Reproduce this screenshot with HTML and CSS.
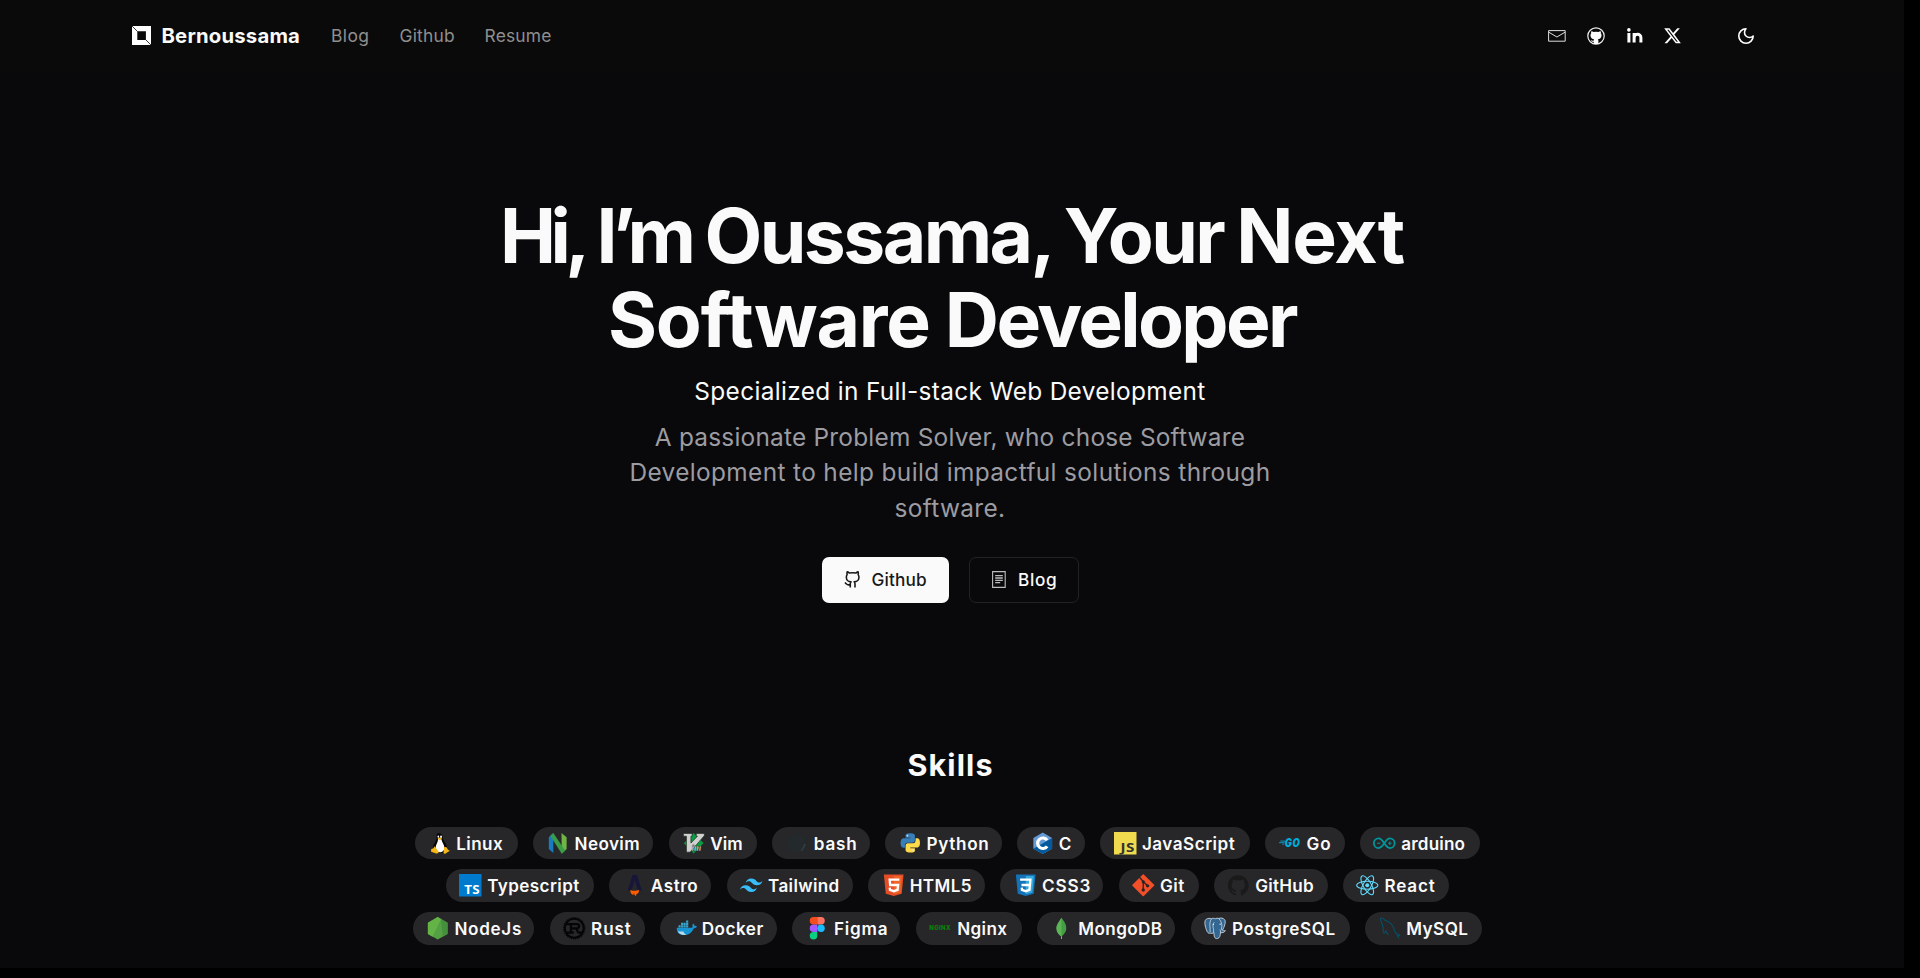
FILE: index.html
```html
<!DOCTYPE html>
<html lang="en">
<head>
<meta charset="utf-8">
<title>Bernoussama</title>
<link rel="stylesheet" href="styles.css">
</head>
<body>
<div class="page">
  <header class="header">
    <a class="brand">
      <svg class="brand-logo" viewBox="0 0 19 19"><path fill="#fff" fill-rule="evenodd" d="M0 0h19v19H0zM5.300 5.300v8.600h8.600V5.300z"/><path stroke="#0a0a0a" stroke-width=".8" d="M0 0l5.500 5.500M13.700 13.700L19 19"/></svg>
      <span class="brand-name">Bernoussama</span>
    </a>
    <nav class="nav">
      <a class="nav-blog">Blog</a>
      <a class="nav-github">Github</a>
      <a>Resume</a>
    </nav>
    <div class="socials">
      <svg class="social-mail" viewBox="0 0 18 12"><path fill="none" stroke="#dedede" d="M.6.6h16.600v10.600H.6zM.8 2.200l8.100 4.800 8.100-4.800"/></svg>
      <svg class="social-github" viewBox="0 0 18 18"><circle cx="9" cy="9" r="8.200" fill="none" stroke="#eee" stroke-width="1.200"/><path fill="#fff" d="M4.300 4.200c.8 0 1.700.4 2.400.9a9 9 0 0 1 4.600 0c.7-.5 1.600-.9 2.400-.9.3.8.3 1.500.1 2.100.6.7.8 1.400.7 2.400-.2 2.300-1.600 3.300-3.700 3.600.5.5.6 1 .6 1.800v3H6.700v-2.400c-1.500.3-2.200-.4-2.700-1.500.9 0 1.300.8 2.700.5 0-.6.2-1.100.5-1.400-2.100-.3-3.500-1.300-3.700-3.600-.1-1 .1-1.700.7-2.400-.2-.6-.2-1.300.1-2.100z"/></svg>
      <svg class="social-linkedin" viewBox="0 0 16 15"><circle cx="1.900" cy="1.900" r="1.800" fill="#fff"/><path fill="none" stroke="#fff" stroke-width="3" d="M1.900 5v9.500M7.100 14.500V5M7.100 10c0-4.600 6.800-5 6.800-.4v4.900"/></svg>
      <svg class="social-x" viewBox="1 2 22 20"><path fill="#fff" d="M18.244 2.250h3.308l-7.227 8.260 8.502 11.240H16.170l-5.214-6.817L4.990 21.750H1.680l7.730-8.835L1.254 2.250H8.080l4.713 6.231zm-1.161 17.520h1.833L7.084 4.126H5.117z"/></svg>
      <svg class="theme-moon" viewBox="2 2 20 20"><path fill="none" stroke="#fff" stroke-width="2" stroke-linejoin="round" d="M12 3a6 6 0 0 0 9 9 9 9 0 1 1-9-9Z"/></svg>
    </div>
  </header>

  <main class="main">
    <h1 class="title"><span class="title-line"><span class="tight">Hi, I’m </span><span class="name">Oussama, Your </span><span class="loose">Next</span></span><span class="title-line"><span class="loose">Software </span><span class="name">Developer</span></span></h1>
    <p class="subtitle">Specialized in Full-stack Web Development</p>
    <p class="lead"><span class="lead-first">A passionate Problem Solver, who chose Software</span><br>Development to help build impactful solutions through<br>software.</p>
    <div class="actions">
      <a class="btn btn--primary">
        <svg class="btn-github-icon" viewBox="1 1 21 22"><path fill="none" stroke="#18181b" stroke-width="2" stroke-linejoin="round" d="M15 22v-4a4.800 4.800 0 0 0-1-3.500c3 0 6-2 6-5.500.08-1.250-.27-2.480-1-3.500.28-1.150.28-2.350 0-3.500 0 0-1 0-3 1.500-2.640-.5-5.360-.5-8 0C6 2 5 2 5 2c-.3 1.150-.3 2.350 0 3.500A5.403 5.403 0 0 0 4 9c0 3.500 3 5.500 6 5.500-.39.49-.68 1.050-.85 1.650-.17.6-.22 1.230-.15 1.850v4M9 18c-4.510 2-5-2-7-2"/></svg>
        <span>Github</span>
      </a>
      <a class="btn btn--outline">
        <svg class="btn-blog-icon" viewBox="0 0 14 17"><path fill="none" stroke="#bdbdbd" stroke-width="1.100" d="M.6.6h12.600v15.800H.6z"/><path stroke="#bdbdbd" stroke-width="1.300" d="M3.200 4.600h7.600M3.200 7h7.600M3.200 9.400h7.600M3.200 11.600h5"/></svg>
        <span class="btn-blog-label">Blog</span>
      </a>
    </div>

    <h2 class="skills-title">Skills</h2>
    <ul class="skills">
      <li class="skill linux"><svg viewBox="0 0 24 24"><path fill="#050505" d="M10 1.500c3-.8 5.600.8 5.600 4 0 3.500 4.900 7.500 4.900 12.500L17 22H9l-3.800-4.500C5.200 13.500 9.500 9 9.300 6.500c-.2-2-.4-4 .7-5z"/><path fill="#fff" d="M10.800 7.500l3.500.3c.5 3.200 3.200 5.700 3.200 9.200 0 2.800-2.200 4.500-4.700 4.500S8.200 20 8 17.500c-.1-3.600 2.700-6.300 2.800-10z"/><ellipse cx="11" cy="5" rx=".9" ry="1.200" fill="#fff"/><ellipse cx="13.900" cy="5" rx="1" ry="1.300" fill="#fff"/><path fill="#f7b715" d="M10 6.800l2.300-1 2.800 1-2.500 1.900zM7 15.300l4.200 5.500c.5 1.800-1 2.300-2.500 2L3.500 21c-.7-.5 0-1.500 0-3l2-.5zM17.300 15.800l2.500.5 1.500 2.500 1.700 1c.3.900-1.500 1.100-3 2.400s-3.200 1.300-3.500-.4z"/></svg>Linux</li>
      <li class="skill neovim"><svg viewBox="0 0 24 24"><path fill="#197cc0" d="M3 5.500L7.800 1v21.500L3 18z"/><path fill="#6fb445" d="M16.500 1L22 5.500V18l-5.200 4.800z"/><path fill="#3a9b48" d="M7.800 1L20.500 20l-3.700 3.300L4.500 4z"/></svg>Neovim</li>
      <li class="skill vim"><svg viewBox="0 0 24 24"><path fill="#089c42" d="M12.500 1L23 11.800 12.500 23 2 12z"/><path fill="#d0d0d0" stroke="#192419" stroke-width=".7" d="M1.500 1.500h9.300v3H9.500v7.300l7-7.300h-1.300v-3h8.600v2.400L8.600 21.500H4.700V4.500H1.500z"/><text x="10" y="20.500" font-family="Liberation Serif" font-style="italic" font-weight="700" font-size="10" fill="#ddd" stroke="#192419" stroke-width=".3">im</text></svg>Vim</li>
      <li class="skill bash"><svg viewBox="0 0 24 24"><path fill="#24292b" d="M12 1l10 5.500v11L12 23 2 17.500v-11z"/><path stroke="#304348" stroke-width="1.500" d="M16.500 20l4-7"/></svg>bash</li>
      <li class="skill python"><svg viewBox="-2 -1.600 28 28"><path fill="#387eb8" d="M14.250.18l.9.2.73.26.59.3.45.32.34.34.25.34.16.33.1.3.04.26.02.2-.01.13V8.500l-.05.63-.13.55-.21.46-.26.38-.3.31-.33.25-.35.19-.35.14-.33.1-.3.07-.26.04-.21.02H8.770l-.69.05-.59.14-.5.22-.41.27-.33.32-.27.35-.2.36-.15.37-.1.35-.07.32-.04.27-.02.21v3.060H3.170l-.21-.03-.28-.07-.32-.12-.35-.18-.36-.26-.36-.36-.35-.46-.32-.59-.28-.73-.21-.88-.14-1.050-.05-1.230.06-1.220.16-1.040.24-.87.32-.71.36-.57.4-.44.42-.33.42-.24.4-.16.36-.1.32-.05.24-.01h.16l.06.01h8.160v-.83H6.180l-.01-2.750-.02-.37.05-.34.11-.31.17-.28.25-.26.31-.23.38-.2.44-.18.51-.15.58-.12.64-.1.71-.06.77-.04.84-.02 1.270.05z"/><path transform="rotate(180 12 12)" fill="#ffdb4c" d="M14.250.18l.9.2.73.26.59.3.45.32.34.34.25.34.16.33.1.3.04.26.02.2-.01.13V8.500l-.05.63-.13.55-.21.46-.26.38-.3.31-.33.25-.35.19-.35.14-.33.1-.3.07-.26.04-.21.02H8.770l-.69.05-.59.14-.5.22-.41.27-.33.32-.27.35-.2.36-.15.37-.1.35-.07.32-.04.27-.02.21v3.060H3.170l-.21-.03-.28-.07-.32-.12-.35-.18-.36-.26-.36-.36-.35-.46-.32-.59-.28-.73-.21-.88-.14-1.050-.05-1.230.06-1.220.16-1.040.24-.87.32-.71.36-.57.4-.44.42-.33.42-.24.4-.16.36-.1.32-.05.24-.01h.16l.06.01h8.160v-.83H6.180l-.01-2.750-.02-.37.05-.34.11-.31.17-.28.25-.26.31-.23.38-.2.44-.18.51-.15.58-.12.64-.1.71-.06.77-.04.84-.02 1.270.05z"/><circle cx="8.500" cy="3" r="1.100" fill="#ddd"/><circle cx="15.500" cy="21" r="1.100" fill="#ddd"/></svg>Python</li>
      <li class="skill clang"><svg viewBox="0 0 24 24"><path fill="#659ad3" d="M12.500.5l10 5.800v11.500l-10 5.700-10-5.700V6.300z"/><path fill="#03599c" d="M22.500 6.300v11.500l-10 5.700-10-5.700z"/><path fill="none" stroke="#fff" stroke-width="3.400" d="M17.200 8.700a5.600 5.600 0 1 0 0 6.600"/></svg>C</li>
      <li class="skill javascript"><svg viewBox="0 0 24 24"><path fill="#f0db4f" d="M0 0h24v24H0z"/><text x="6.800" y="21.600" font-family="Open Sans" font-weight="700" font-size="13.500" fill="#323330" textLength="15.500" lengthAdjust="spacingAndGlyphs">JS</text></svg>JavaScript</li>
      <li class="skill go"><svg viewBox="0 0 24 24"><path stroke="#00acd7" stroke-width=".9" d="M1.500 9.700h5M0 11.400h6M3.500 13h2"/><text x="6" y="16.400" font-family="Inter" font-weight="900" font-style="italic" font-size="12" fill="#00acd7" textLength="16.800" lengthAdjust="spacingAndGlyphs">GO</text></svg>Go</li>
      <li class="skill arduino"><svg viewBox="0 0 24 24"><path fill="none" stroke="#00979c" stroke-width="1.900" d="M12 12C9.500 8.300 8 6.900 6 6.900a5.100 5.100 0 0 0 0 10.200c2 0 3.500-1.400 6-5.100s4-5.100 6-5.100a5.100 5.100 0 0 1 0 10.200c-2 0-3.500-1.400-6-5.100z"/><path stroke="#00979c" stroke-width="1.100" d="M4.300 12h3.600M16.200 12h3.600M18 10.200v3.600"/></svg>arduino</li>

      <li class="skill typescript"><svg viewBox="0 0 24 24"><path fill="#007acc" d="M0 0h24v24H0z"/><text x="5.500" y="21.400" font-family="Open Sans" font-weight="700" font-size="13.500" fill="#fff" textLength="17" lengthAdjust="spacingAndGlyphs">TS</text></svg>Typescript</li>
      <li class="skill astro"><svg viewBox="0 0 24 24"><path fill="#17153a" d="M10.200 1h4.600l5.400 17c-1.700-.9-3.200-1.300-4.600-1.500L12.500 6.500l-3 10c-1.600.2-3 .6-4.600 1.500z"/><path fill="#ff5d01" d="M8 17c2.500 1.300 6.500 1.300 8.800-.2.6 2.500-.5 3.700-2 4.600-.7.500-1 1.100-.8 2-1.800-.6-2.400-1.700-2-3.100-.7.500-1 1.200-.9 2.100C8.600 21.300 7.500 19.500 8 17z"/></svg>Astro</li>
      <li class="skill tailwind"><svg viewBox="0 0 24 24"><path fill="#38bdf8" d="M12.001 4.800c-3.200 0-5.200 1.600-6 4.800 1.200-1.600 2.600-2.200 4.200-1.800.913.228 1.565.89 2.288 1.624C13.666 10.618 15.027 12 18.001 12c3.200 0 5.200-1.600 6-4.800-1.200 1.600-2.600 2.200-4.200 1.800-.913-.228-1.565-.89-2.288-1.624C16.337 6.182 14.976 4.800 12.001 4.800zm-6 7.200c-3.200 0-5.200 1.600-6 4.800 1.200-1.600 2.600-2.200 4.200-1.800.913.228 1.565.89 2.288 1.624 1.177 1.194 2.538 2.576 5.512 2.576 3.200 0 5.200-1.600 6-4.800-1.200 1.600-2.600 2.200-4.200 1.800-.913-.228-1.565-.89-2.288-1.624C10.337 13.382 8.976 12 6.001 12z"/></svg>Tailwind</li>
      <li class="skill html"><svg viewBox="0 0 24 24"><path fill="#e44d26" d="M2 .5h21l-2 20.500-8.500 2.500L4 21z"/><path fill="#f16529" d="M12.500 2.200h8.700L19.500 19.700l-7 2z"/><path fill="none" stroke="#fff" stroke-width="2.500" d="M18.500 6H8.200l.5 5.700h8.500l-.6 5.300-4.100 1.300-4-1.300-.2-2.500"/></svg>HTML5</li>
      <li class="skill css"><svg viewBox="0 0 24 24"><path fill="#1572b6" d="M2 .5h21l-2 20.500-8.500 2.500L4 21z"/><path fill="#33a9dc" d="M12.500 2.200h8.700L19.500 19.700l-7 2z"/><path fill="none" stroke="#fff" stroke-width="2.500" d="M6.500 6h11l-.5 5.700H8M17 11.700l-.5 5.300-4 1.300-4-1.300-.2-2.500"/></svg>CSS3</li>
      <li class="skill git"><svg viewBox="0 0 24 24"><path fill="#f34f29" stroke="#f34f29" stroke-width="1.600" stroke-linejoin="round" d="M12 1l11 11-11 11L1 12z"/><path fill="none" stroke="#2a2425" stroke-width="1.400" d="M8 3.500l4 4.500v9M12 8l4.500 4.500"/><circle cx="12" cy="8.300" r="1.700" fill="#2a2425"/><circle cx="12" cy="17" r="1.800" fill="#2a2425"/><circle cx="16.600" cy="12.600" r="1.800" fill="#2a2425"/></svg>Git</li>
      <li class="skill github"><svg viewBox="-.5 -.5 25 25"><path fill="#1a1a1b" d="M12 .8C5.600.8.5 5.900.5 12.300c0 5.100 3.300 9.400 7.900 10.900.6.100.8-.3.8-.6v-2c-3.200.7-3.900-1.500-3.900-1.500-.5-1.300-1.300-1.700-1.300-1.700-1-.7.100-.7.100-.7 1.200.1 1.800 1.200 1.800 1.200 1 1.800 2.700 1.300 3.300 1 .1-.8.400-1.300.7-1.500-2.500-.3-5.200-1.300-5.200-5.700 0-1.300.4-2.300 1.200-3.100-.1-.3-.5-1.500.1-3.100 0 0 1-.3 3.200 1.200a11 11 0 0 1 5.700 0c2.200-1.500 3.200-1.200 3.200-1.200.6 1.600.2 2.800.1 3.100.7.800 1.200 1.800 1.200 3.100 0 4.400-2.700 5.400-5.300 5.700.4.400.8 1.100.8 2.100v3.200c0 .3.200.7.800.6 4.600-1.500 7.900-5.800 7.900-10.900C23.500 5.900 18.400.8 12 .8z"/></svg>GitHub</li>
      <li class="skill react"><svg viewBox="0 0 24 24"><g fill="none" stroke="#61dafb" stroke-width="1.150"><ellipse cx="12" cy="12" rx="11.300" ry="4.300"/><ellipse cx="12" cy="12" rx="11.300" ry="4.300" transform="rotate(60 12 12)"/><ellipse cx="12" cy="12" rx="11.300" ry="4.300" transform="rotate(120 12 12)"/></g><circle cx="12" cy="12" r="2.100" fill="#61dafb"/></svg>React</li>

      <li class="skill nodejs"><svg viewBox="0 0 24 24"><path fill="#54a044" d="M12.500 0L23 6v12l-10.500 6L2 18V6z"/><path fill="#64b346" d="M12.500 0L16 2 7 21 2 18V6z"/><path fill="#468f3c" d="M16 2l7 4v12l-5 2.900z"/></svg>NodeJs</li>
      <li class="skill rust"><svg viewBox="0 0 24 24"><circle cx="12" cy="12" r="10.100" fill="none" stroke="#050505" stroke-width="2.200"/><circle cx="12" cy="12" r="11.400" fill="none" stroke="#050505" stroke-width="1.200" stroke-dasharray="1.100 1.140"/><path fill="none" stroke="#050505" stroke-width="2.400" d="M3.500 7.600h11.300c3.200 0 3.200 4.400 0 4.400H8M8.500 7.600v9M4 16.600h7.500M13 12c3.200 0 1.200 4.600 4 4.600h3.500"/></svg>Rust</li>
      <li class="skill docker"><svg viewBox="-.5 0 24 24"><path fill="#1794d4" d="M2.500 11.500h15.200c.7 0 1.500-.2 1.800-.5-.7-1.300-.4-2.900.4-4 1 .7 1.500 1.500 1.500 2.500.9-.2 1.900 0 2.600.5-.6 1.300-1.800 1.900-3.400 1.900C18.500 17 14.800 19.300 10 19.300c-5 0-7.800-2.600-7.500-7.800z"/><path fill="#39a6cf" d="M4.300 8.800h2.300v2.300H4.300zM7 8.800h2.300v2.300H7zM9.700 8.800H12v2.300H9.700zM12.400 8.800h2.300v2.300h-2.300zM7 6.200h2.300v2.300H7zM9.700 6.200H12v2.300H9.700zM12.400 6.200h2.300v2.300h-2.300zM12.400 3.600h2.300v2.300h-2.300z"/><path fill="#b9dbe8" d="M3.500 15.300c2 .5 4.500 0 6 .2.800 1.900 2 3.300 3.500 3.600-4.500.8-8.200-.6-9.500-3.800z"/></svg>Docker</li>
      <li class="skill figma"><svg viewBox="1 0 24 24"><path fill="#f24e1e" d="M13 0H9a4 4 0 0 0 0 8h4z"/><path fill="#ff7262" d="M13 0h4a4 4 0 0 1 0 8h-4z"/><path fill="#a259ff" d="M13 8H9a4 4 0 0 0 0 8h4z"/><circle cx="17" cy="12" r="4" fill="#1abcfe"/><path fill="#0acf83" d="M9 16h4v4a4 4 0 1 1-4-4z"/></svg>Figma</li>
      <li class="skill nginx"><svg viewBox="0 0 24 24"><text x=".3" y="14" font-family="Inter" font-weight="800" font-size="6.500" fill="#098209" textLength="23" lengthAdjust="spacingAndGlyphs">NGINX</text></svg>Nginx</li>
      <li class="skill mongodb"><svg viewBox="0 0 24 24"><path fill="#a9aa88" d="M11.600 19h1l.3 4.500h-1z"/><path fill="#449e45" d="M12.200.8c3 4.100 5.200 6.700 5.200 11.300 0 3.700-2.200 6.300-5.200 8.700-3.100-2.200-5.300-5-5.300-8.600 0-4.200 2.700-6.800 5.300-11.400z"/><path fill="#5eb355" d="M12.200.8v20c-3.100-2.200-5.300-5-5.300-8.600 0-4.200 2.700-6.800 5.300-11.400z"/></svg>MongoDB</li>
      <li class="skill postgresql"><svg viewBox="0 0 24 24"><path fill="#336791" stroke="#d5dde3" stroke-width=".9" stroke-linejoin="round" d="M8 1.800c1.600-.7 3-.5 4 0 1.200-.6 2.600-.7 3.800-.3 2-.8 4.700-.5 6.300 1.500 1.500 2-.5 8-2.400 11 .8.700 2 .7 3 .5-.8 2-3 2.600-5.200 2.100-.2 2.800-.3 5.900-3.300 6.400-3.200.5-3.500-2.600-3.600-6.400-1.200.9-3.200 1.200-4.300.5-2.200 1.200-3.600-2.600-4.600-6C.5 7 .6 3.500 2.500 2.300 4 1.300 6.300 1.200 8 1.800z"/><path fill="none" stroke="#d5dde3" stroke-width=".8" d="M8 2C6 4.500 6 8 6.500 12c.5 1.500-.5 2.500 0 4M15.800 1.700c2.500 2.500 3.500 6 3.200 8.500s-1 3 .4 4M11 5.500c-2 2-1.500 5-.8 7.500v3.600M17.700 16.600c-.2-1.500 0-2-.7-3.200"/><circle cx="10" cy="7.800" r=".7" fill="#fff"/><circle cx="17.200" cy="7.600" r=".7" fill="#fff"/></svg>PostgreSQL</li>
      <li class="skill mysql"><svg viewBox="0 0 24 24"><path fill="none" stroke="#00546b" stroke-width="1.100" stroke-linejoin="round" d="M22.500 22.500l-2-2.600 2.700-.5c-2-.9-4-1-5-3.400C16.500 9.500 12.500 5 8 3.800 6.200 2 4.200.8 2.800 1.300c-1.100.8.3 2.700 1 4.200.6 3 2 4.800 1.800 7.500-.2 2.500.2 4.500 1.300 4.300 1 0 .9-2 1.200-2.800.9 1.500 1.700 3.400 3.200 4.500"/></svg>MySQL</li>
    </ul>
  </main>
</div>
</body>
</html>
```

FILE: styles.css
```css
* { box-sizing: border-box; }

body {
  margin: 0;
  background: #000;
  color: #fafafa;
  font-family: Inter, "Liberation Sans", sans-serif;
  overflow: hidden;
}

svg { display: block; flex: none; overflow: visible; }

.page {
  width: 1904px;
  height: 968px;
  background: #09090b;
  overflow: hidden;
}

/* Header */
.header {
  display: flex;
  align-items: center;
  height: 71px;
  padding: 0 150px 0 132px;
  background: #0a0a0a;
}

.brand { display: flex; align-items: center; gap: 10.500px; width: 199px; }
.brand-logo { width: 19px; height: 19px; }
.brand-name { font-size: 20.300px; font-weight: 700; letter-spacing: .2px; }

.nav {
  display: flex;
  font-size: 17.400px;
  line-height: 24px;
  letter-spacing: .2px;
  color: #8f8f8f;
}
.nav-blog { width: 68.500px; letter-spacing: .4px; }
.nav-github { width: 85px; }

.socials { display: flex; align-items: center; margin-left: auto; }
.social-mail { width: 18px; height: 12px; margin-right: 20.500px; }
.social-github { width: 18px; height: 18px; margin-right: 22px; }
.social-linkedin { width: 16px; height: 15px; margin-right: 21.500px; }
.social-x { width: 17px; height: 15.500px; margin-right: 57px; }
.theme-moon { width: 16px; height: 16px; }

/* Hero */
.main {
  display: flex;
  flex-direction: column;
  align-items: center;
  width: 1900px;
  padding-top: 123px;
}

.title {
  margin: 0 0 11px 4px;
  font-size: 75px;
  line-height: 84px;
  font-weight: 700;
  text-align: center;
  white-space: nowrap;
}
.title-line { display: block; }
.tight { letter-spacing: -5.600px; word-spacing: 2px; }
.name { letter-spacing: -2.600px; word-spacing: -2px; }
.loose { letter-spacing: -1.200px; word-spacing: -1.500px; }

.subtitle {
  margin: 0 0 10.600px;
  font-size: 24.400px;
  line-height: 36px;
  letter-spacing: .34px;
}

.lead {
  margin: 0;
  font-size: 24.400px;
  line-height: 35.600px;
  letter-spacing: .37px;
  text-align: center;
  color: #9c9ca2;
}
.lead-first { letter-spacing: .23px; }

.actions { display: flex; gap: 20.500px; margin-top: 30.200px; }

.btn {
  display: flex;
  align-items: center;
  height: 46px;
  padding-left: 22px;
  border-radius: 7px;
  font-size: 17.200px;
  font-weight: 500;
}
.btn--primary { width: 127px; background: #fafafa; color: #18181b; gap: 11.500px; letter-spacing: .16px; }
.btn--outline { width: 109.500px; border: 1px solid #222225; gap: 12.500px; padding-left: 21.500px; }
.btn-blog-label { letter-spacing: .7px; }
.btn-github-icon { width: 16.500px; height: 17.500px; }
.btn-blog-icon { width: 14px; height: 17px; }

/* Skills */
.skills-title {
  margin: 144.700px 0 0 1px;
  font-size: 30.500px;
  line-height: 36px;
  font-weight: 700;
  letter-spacing: 1.100px;
}

.skills {
  display: flex;
  flex-wrap: wrap;
  justify-content: center;
  gap: 10.200px 15.200px;
  width: 1080px;
  margin: 43.500px 5.400px 0 0;
  padding: 0;
  list-style: none;
}

.skill {
  display: flex;
  align-items: center;
  gap: 5.500px;
  height: 32.500px;
  padding-left: 13.500px;
  border-radius: 17px;
  background: #27272a;
  font-size: 17.100px;
  font-weight: 600;
  white-space: nowrap;
}
.skill svg { width: 22.500px; height: 22.500px; }

.linux { width: 103px; letter-spacing: .41px; }
.neovim { width: 120.500px; letter-spacing: .42px; }
.vim { width: 88.500px; letter-spacing: .09px; }
.bash { width: 97.500px; letter-spacing: .8px; }
.python { width: 117px; letter-spacing: .7px; }
.clang { width: 68px; }
.javascript { width: 149.500px; letter-spacing: .5px; }
.go { width: 79.500px; letter-spacing: .8px; }
.arduino { width: 120px; letter-spacing: .15px; }
.typescript { width: 148.500px; letter-spacing: .4px; }
.astro { width: 102px; letter-spacing: .6px; }
.tailwind { width: 126.500px; letter-spacing: .35px; }
.html { width: 117px; letter-spacing: .4px; }
.css { width: 103px; letter-spacing: .9px; }
.git { width: 80px; letter-spacing: .41px; }
.github { width: 114px; letter-spacing: .24px; }
.react { width: 106px; letter-spacing: .8px; }
.nodejs { width: 121.500px; letter-spacing: .7px; }
.rust { width: 95.500px; letter-spacing: .9px; }
.docker { width: 117px; letter-spacing: .5px; }
.figma { width: 108px; letter-spacing: .8px; }
.nginx { width: 106px; letter-spacing: .4px; }
.mongodb { width: 138.500px; letter-spacing: .4px; }
.postgresql { width: 159px; letter-spacing: .6px; }
.mysql { width: 117px; letter-spacing: .45px; }
```
